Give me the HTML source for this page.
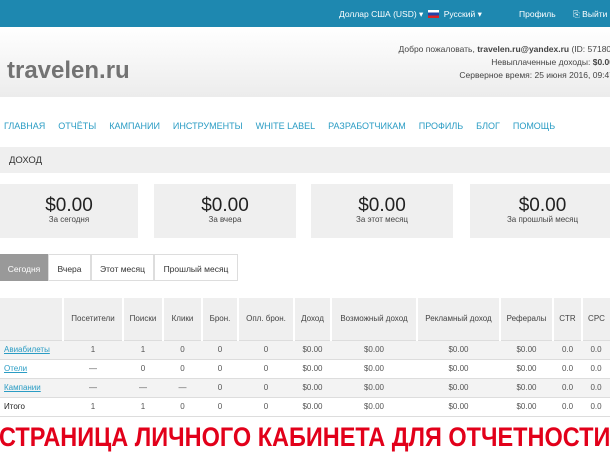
<!DOCTYPE html><html><head><meta charset="utf-8"><style>
*{margin:0;padding:0;box-sizing:border-box}
body{width:610px;height:456px;overflow:hidden;background:#fff;font-family:"Liberation Sans",sans-serif;color:#333;position:relative}
.top{position:absolute;left:0;top:0;width:610px;height:27px;background:#1e88b0;color:#fff;font-size:8.5px}
.top span{position:absolute;top:9px;white-space:nowrap}
.hdr{position:absolute;top:27px;left:0;width:610px;height:70px;background:linear-gradient(#fff,#ececec)}
.logo{position:absolute;left:7px;top:30px;font-size:24px;font-weight:bold;color:#737373}
.info{position:absolute;right:-4px;top:16px;font-size:8.5px;color:#444;text-align:right;line-height:13px;white-space:nowrap}
.nav{position:absolute;top:121px;left:4px;font-size:9px;color:#2a9cc4;white-space:nowrap}
.nav span{margin-right:13px}
.bar{position:absolute;top:147px;left:0;width:610px;height:26px;background:#efefef;font-size:9.5px;padding:8px 9px;color:#333}
.card{position:absolute;top:184px;height:54px;background:#efefef;text-align:center}
.card b{display:block;font-weight:normal;font-size:19px;margin-top:12px;line-height:19px;color:#222}
.card i{display:block;font-style:normal;font-size:8px;color:#444;line-height:9px}
.tab{position:absolute;top:254px;height:27px;border:1px solid #ddd;font-size:8.5px;padding-top:9px;text-align:center;background:#fff}
table{position:absolute;top:298px;left:0;width:610px;border-collapse:collapse;font-size:8px;color:#555}
td{text-align:center;border-bottom:1px solid #ddd;height:19px;padding:0}
tr.h td{height:42px;background:#efefef;border-left:2px solid #fff;color:#444}
tr.g td{background:#f3f3f3}
td.l{text-align:left;padding-left:4px}
a{color:#2a9cc4;text-decoration:underline}
.red{position:absolute;top:422px;left:-1px;font-size:27px;font-weight:bold;color:#e2001a;white-space:nowrap;transform:scaleX(0.87);transform-origin:0 0}
</style></head><body>
<div class="top"><span style="left:339px">Доллар США (USD) ▾</span><span style="left:428px"><i style="display:inline-block;width:11px;height:8px;background:linear-gradient(#fff 33%,#2244aa 33%,#2244aa 66%,#d22 66%);vertical-align:-1px"></i>&nbsp; Русский ▾</span><span style="left:519px">Профиль</span><span style="left:573px">⎘ Выйти</span></div>
<div class="hdr"><div class="logo">travelen.ru</div>
<div class="info">Добро пожаловать, <b>travelen.ru@yandex.ru</b> (ID: 57180)<br>Невыплаченные доходы: <b>$0.00</b><br>Серверное время: 25 июня 2016, 09:47</div></div>
<div class="nav"><span>ГЛАВНАЯ</span><span>ОТЧЁТЫ</span><span>КАМПАНИИ</span><span>ИНСТРУМЕНТЫ</span><span>WHITE LABEL</span><span>РАЗРАБОТЧИКАМ</span><span>ПРОФИЛЬ</span><span>БЛОГ</span><span>ПОМОЩЬ</span></div>
<div class="bar">ДОХОД</div>
<div class="card" style="left:0;width:138px"><b>$0.00</b><i>За сегодня</i></div>
<div class="card" style="left:154px;width:142px"><b>$0.00</b><i>За вчера</i></div>
<div class="card" style="left:311px;width:142px"><b>$0.00</b><i>За этот месяц</i></div>
<div class="card" style="left:470px;width:145px"><b>$0.00</b><i>За прошлый месяц</i></div>
<div class="tab" style="left:0;width:48px;background:#999;color:#fff;border-color:#999">Сегодня</div>
<div class="tab" style="left:48px;width:43px">Вчера</div>
<div class="tab" style="left:91px;width:63px">Этот месяц</div>
<div class="tab" style="left:154px;width:84px">Прошлый месяц</div>
<table>
<colgroup><col style="width:63px"><col style="width:60px"><col style="width:40px"><col style="width:39px"><col style="width:36px"><col style="width:56px"><col style="width:37px"><col style="width:86px"><col style="width:83px"><col style="width:53px"><col style="width:29px"><col style="width:28px"></colgroup>
<tr class="h"><td style="border-left:0"></td><td>Посетители</td><td>Поиски</td><td>Клики</td><td>Брон.</td><td>Опл. брон.</td><td>Доход</td><td>Возможный доход</td><td>Рекламный доход</td><td>Рефералы</td><td>CTR</td><td>CPC</td></tr>
<tr class="g"><td class="l"><a>Авиабилеты</a></td><td>1</td><td>1</td><td>0</td><td>0</td><td>0</td><td>$0.00</td><td>$0.00</td><td>$0.00</td><td>$0.00</td><td>0.0</td><td>0.0</td></tr>
<tr><td class="l"><a>Отели</a></td><td>—</td><td>0</td><td>0</td><td>0</td><td>0</td><td>$0.00</td><td>$0.00</td><td>$0.00</td><td>$0.00</td><td>0.0</td><td>0.0</td></tr>
<tr class="g"><td class="l"><a>Кампании</a></td><td>—</td><td>—</td><td>—</td><td>0</td><td>0</td><td>$0.00</td><td>$0.00</td><td>$0.00</td><td>$0.00</td><td>0.0</td><td>0.0</td></tr>
<tr><td class="l" style="color:#222">Итого</td><td>1</td><td>1</td><td>0</td><td>0</td><td>0</td><td>$0.00</td><td>$0.00</td><td>$0.00</td><td>$0.00</td><td>0.0</td><td>0.0</td></tr>
</table>
<div class="red">СТРАНИЦА ЛИЧНОГО КАБИНЕТА ДЛЯ ОТЧЕТНОСТИ</div>
</body></html>
